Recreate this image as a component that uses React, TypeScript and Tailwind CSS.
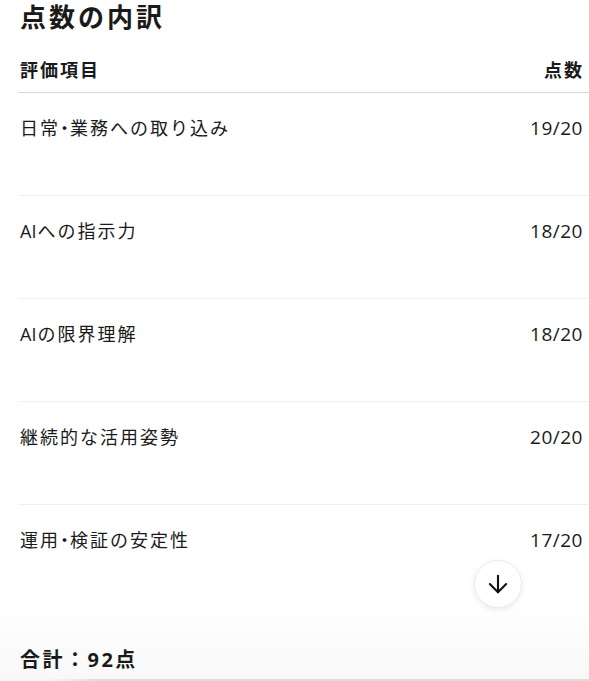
import React from "react";
import { ArrowDown } from "lucide-react";

type Part = { t: string; k: "cjk" | "lat" | "dot" };

const rows: { name: Part[]; score: string }[] = [
  { name: [{ t: "日常", k: "cjk" }, { t: "・", k: "dot" }, { t: "業務への取り込み", k: "cjk" }], score: "19/20" },
  { name: [{ t: "AI", k: "lat" }, { t: "への指示力", k: "cjk" }], score: "18/20" },
  { name: [{ t: "AI", k: "lat" }, { t: "の限界理解", k: "cjk" }], score: "18/20" },
  { name: [{ t: "継続的な活用姿勢", k: "cjk" }], score: "20/20" },
  { name: [{ t: "運用", k: "cjk" }, { t: "・", k: "dot" }, { t: "検証の安定性", k: "cjk" }], score: "17/20" },
];

export default function App() {
  return (
    <div
      className="relative w-[589px] h-[681px] overflow-hidden bg-white text-[#1a1a1a]"
      style={{ fontFamily: '"Segoe UI", "Open Sans", "Noto Sans CJK JP", sans-serif' }}
    >
      <h1 className="pl-[20px] h-[34px] leading-[34px] text-[26px] tracking-[3px] font-bold">点数の内訳</h1>
      <div className="ml-[18px] w-[571px] mt-[14px]">
        <div className="flex h-[45px] items-center justify-between border-b border-[#d9d9d9] pl-[2px] pr-[5px] text-[18px] tracking-[2px] font-bold">
          <span>評価項目</span>
          <span>点数</span>
        </div>
        {rows.map((r) => (
          <div
            key={r.score + r.name.map((p) => p.t).join("")}
            className="flex h-[103px] items-start justify-between border-b border-[#f0f0f0] pl-[2px] pr-[6px] pt-[23px] text-[18px] leading-[24px]"
          >
            <span>
              {r.name.map((p, i) =>
                p.k === "dot" ? (
                  <span key={i} className="tracking-[1px] [font-feature-settings:'palt']">{p.t}</span>
                ) : p.k === "lat" ? (
                  <span key={i} className="mr-[1px]">{p.t}</span>
                ) : (
                  <span key={i} className="tracking-[2px]">{p.t}</span>
                )
              )}
            </span>
            <span className="text-[19px] tracking-[0.5px]">{r.score}</span>
          </div>
        ))}
      </div>
      <div className="absolute left-0 right-0 bottom-0 h-[130px] bg-gradient-to-b from-white/0 via-white via-40% to-[#f8f8f8]">
        <div className="absolute left-[474px] top-[9px] flex h-[48px] w-[48px] items-center justify-center rounded-full border border-[#ececec] bg-white shadow-[0_2px_6px_rgba(0,0,0,0.08)]">
          <ArrowDown size={28} strokeWidth={1.8} className="text-[#111]" />
        </div>
        <div className="absolute left-[20px] top-[95px] text-[20px] tracking-[2.5px] font-bold leading-[28px]">合計：92点</div>
        <div className="absolute left-[45px] right-0 bottom-0 h-[2px] bg-gradient-to-r from-[#e5e5e5]/0 via-[#dcdcdc] via-10% to-[#dcdcdc]"></div>
      </div>
    </div>
  );
}
